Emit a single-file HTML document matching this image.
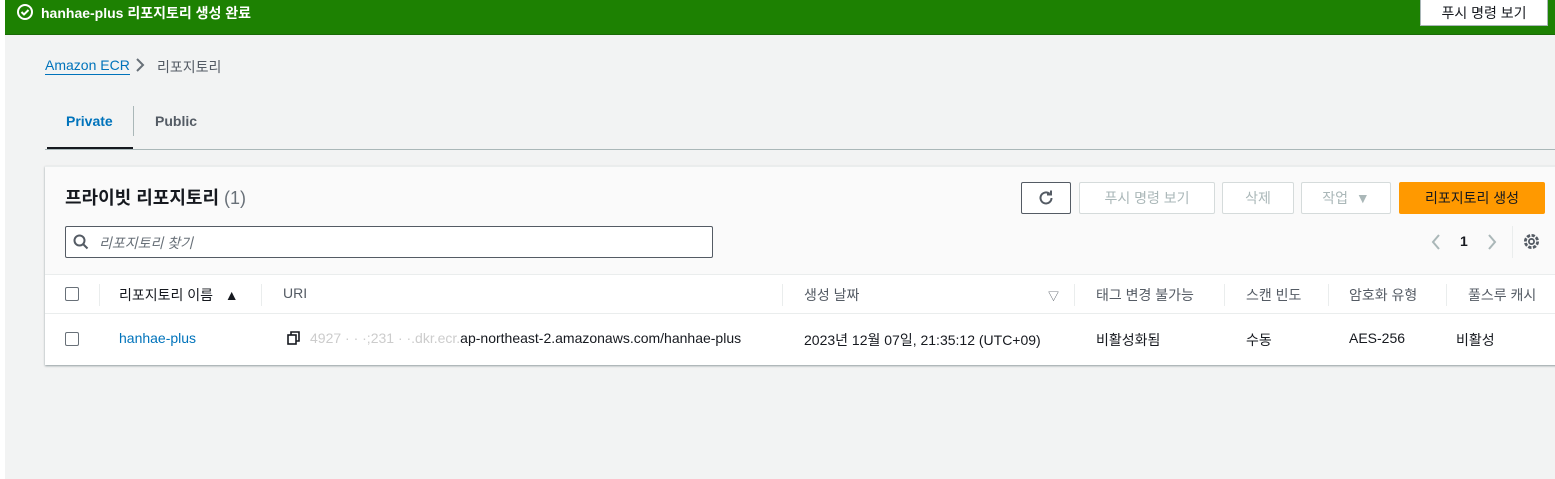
<!DOCTYPE html>
<html><head><meta charset="utf-8"><style>
*{box-sizing:border-box;margin:0;padding:0}
body{width:1555px;height:479px;overflow:hidden;background:#f2f3f3;font-family:"Liberation Sans","Noto Sans CJK KR",sans-serif;font-size:14px;color:#16191f;position:relative}
.a{position:absolute}
.btn{position:absolute;height:32px;border:1px solid #d5dbdb;border-radius:2px;background:#fff;color:#aab7b8;font-size:14px;display:flex;align-items:center;justify-content:center}
.th{position:absolute;top:285px;font-size:14px;color:#545b64}
.td{position:absolute;top:330px;font-size:14px;color:#16191f}
.sep{position:absolute;top:284px;width:1px;height:22px;background:#eaeded}
.cb{position:absolute;left:65px;width:14px;height:14px;border:1px solid #687078;border-radius:2px;background:#fff}
</style></head><body>
<div class="a" style="left:0;top:0;width:5px;height:479px;background:#fff"></div>
<div class="a" style="left:5px;top:0;width:1550px;height:35px;background:#1d8102;border-bottom:1px solid #1a6a06"></div>
<svg class="a" style="left:16px;top:3px" width="18" height="18" viewBox="0 0 18 18"><circle cx="9" cy="9" r="7" fill="none" stroke="#fff" stroke-width="2"/><path d="M5.5 9l2.5 2.5 4.5-4.5" fill="none" stroke="#fff" stroke-width="2"/></svg>
<div class="a" style="left:41px;top:3px;color:#fff;font-size:14px;font-weight:bold">hanhae-plus 리포지토리 생성 완료</div>
<div class="a" style="left:1420px;top:0;width:128px;height:26px;background:#fff;border:1px solid #aab7b8;border-top:none;display:flex;align-items:center;justify-content:center;font-size:14px;color:#16191f">푸시 명령 보기</div>
<div class="a" style="left:45px;top:57px;color:#0073bb;font-size:14px;border-bottom:1px solid #0073bb;line-height:17px">Amazon ECR</div>
<svg class="a" style="left:135px;top:58px" width="10" height="14"><path d="M2 1l6 6-6 6" fill="none" stroke="#687078" stroke-width="2"/></svg>
<div class="a" style="left:157px;top:57px;color:#545b64;font-size:14px">리포지토리</div>
<div class="a" style="left:66px;top:113px;color:#0073bb;font-weight:bold;font-size:14px">Private</div>
<div class="a" style="left:133px;top:106px;width:1px;height:30px;background:#aab7b8"></div>
<div class="a" style="left:155px;top:113px;color:#545b64;font-weight:bold;font-size:14px">Public</div>
<div class="a" style="left:47px;top:147px;width:86px;height:3px;background:#16191f"></div>
<div class="a" style="left:45px;top:149px;width:1510px;height:1px;background:#aab7b8"></div>
<div class="a" style="left:45px;top:166px;width:1515px;height:199px;background:#fff;box-shadow:0 1px 2px rgba(0,28,36,.4);border-top:1px solid #eaeded"></div>
<div class="a" style="left:45px;top:167px;width:1515px;height:107px;background:#fafafa"></div>
<div class="a" style="left:65px;top:184px;font-size:18px;font-weight:bold;color:#16191f">프라이빗 리포지토리 <span style="font-weight:normal;color:#687078">(1)</span></div>
<div class="btn" style="left:1021px;top:182px;width:50px;border-color:#545b64;color:#545b64"><svg width="18" height="18" viewBox="0 0 18 18"><path d="M14.5 9a5.5 5.5 0 1 1-2-4.3" fill="none" stroke="#545b64" stroke-width="2"/><path d="M10 3.5h4v-4" fill="none" stroke="#545b64" stroke-width="2" transform="translate(0 2)"/></svg></div>
<div class="btn" style="left:1079px;top:182px;width:136px">푸시 명령 보기</div>
<div class="btn" style="left:1222px;top:182px;width:72px">삭제</div>
<div class="btn" style="left:1301px;top:182px;width:90px">작업 &nbsp;▼</div>
<div class="btn" style="left:1399px;top:182px;width:146px;background:#ff9900;border-color:#ff9900;color:#16191f">리포지토리 생성</div>
<div class="a" style="left:65px;top:226px;width:648px;height:32px;border:1px solid #545b64;border-radius:2px;background:#fff"></div>
<svg class="a" style="left:73px;top:234px" width="16" height="16"><circle cx="6.5" cy="6.5" r="5" fill="none" stroke="#545b64" stroke-width="2"/><path d="M10 10l4.5 4.5" stroke="#545b64" stroke-width="2"/></svg>
<div class="a" style="left:99px;top:233px;color:#687078;font-style:italic;font-size:14px">리포지토리 찾기</div>
<svg class="a" style="left:1430px;top:233px" width="12" height="18"><path d="M9 2L3 9l6 7" fill="none" stroke="#aab7b8" stroke-width="2"/></svg>
<div class="a" style="left:1460px;top:233px;font-weight:bold;font-size:14px">1</div>
<svg class="a" style="left:1486px;top:233px" width="12" height="18"><path d="M3 2l6 7-6 7" fill="none" stroke="#aab7b8" stroke-width="2"/></svg>
<div class="a" style="left:1512px;top:226px;width:1px;height:32px;background:#eaeded"></div>
<svg class="a" style="left:1522px;top:232px" width="19" height="19" viewBox="0 0 17 17"><circle cx="8.5" cy="8.5" r="5.5" fill="none" stroke="#545b64" stroke-width="2.5" stroke-dasharray="3 1.3"/><circle cx="8.5" cy="8.5" r="2.3" fill="none" stroke="#545b64" stroke-width="1.6"/></svg>
<div class="a" style="left:45px;top:274px;width:1515px;height:1px;background:#eaeded"></div>
<div class="a" style="left:45px;top:313px;width:1515px;height:1px;background:#eaeded"></div>
<div class="cb" style="top:287px"></div>
<div class="sep" style="left:99px"></div>
<div class="th" style="left:119px;color:#16191f">리포지토리 이름 &nbsp;&nbsp;▲</div>
<div class="sep" style="left:261px"></div>
<div class="th" style="left:283px">URI</div>
<div class="sep" style="left:782px"></div>
<div class="th" style="left:804px">생성 날짜</div>
<div class="th" style="left:1048px;font-size:11px;top:288px">▽</div>
<div class="sep" style="left:1074px"></div>
<div class="th" style="left:1096px">태그 변경 불가능</div>
<div class="sep" style="left:1224px"></div>
<div class="th" style="left:1246px">스캔 빈도</div>
<div class="sep" style="left:1328px"></div>
<div class="th" style="left:1349px">암호화 유형</div>
<div class="sep" style="left:1446px"></div>
<div class="th" style="left:1468px">풀스루 캐시</div>
<div class="cb" style="top:332px"></div>
<div class="td" style="left:119px;color:#0073bb">hanhae-plus</div>
<svg class="a" style="left:287px;top:331px" width="14" height="14"><rect x="1" y="4" width="8" height="9" fill="none" stroke="#16191f" stroke-width="1.6"/><path d="M4 4V1h8v9H9" fill="none" stroke="#16191f" stroke-width="1.6"/></svg>
<div class="td" style="left:310px;color:#ccc">4927 · · ·;231 · ·.dkr.ecr.<span style="color:#16191f">ap-northeast-2.amazonaws.com/hanhae-plus</span></div>
<div class="td" style="left:804px">2023년 12월 07일, 21:35:12 (UTC+09)</div>
<div class="td" style="left:1096px">비활성화됨</div>
<div class="td" style="left:1246px">수동</div>
<div class="td" style="left:1349px">AES-256</div>
<div class="td" style="left:1456px">비활성</div>
</body></html>
